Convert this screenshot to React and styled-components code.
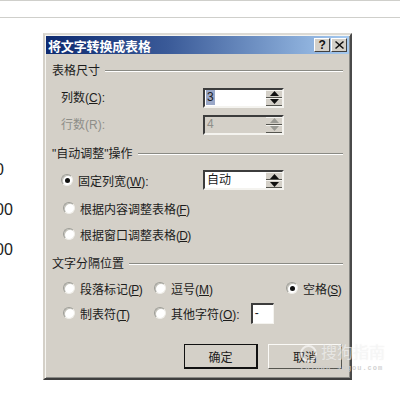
import React from 'react';
import styled, { createGlobalStyle } from 'styled-components';

const Global = createGlobalStyle`
  html, body { margin: 0; padding: 0; background: #fff; }
  * { box-sizing: border-box; }
`;
const FONT = `"Liberation Sans", "Noto Sans CJK SC", sans-serif`;

const Page = styled.div`
  position: relative; width: 400px; height: 400px; overflow: hidden; background: #fff;
  font-family: ${FONT}; font-size: 12px; color: #1c1c1c;
`;
const Ruler = styled.div`
  height: 18px; border-top: 1px solid #cfcfcb; border-bottom: 1px solid #cfcfcb;
`;
const Main = styled.div`display: flex; align-items: flex-start;`;
const DocColumn = styled.div`
  width: 43px; flex: none; padding-top: 132px;
  display: flex; flex-direction: column; overflow: hidden;
`;
const DocLine = styled.div`
  height: 39.75px; margin-left: -5px; color: #222;
  font: 16px/39.75px "Liberation Sans", sans-serif;
`;
const Dialog = styled.div`
  width: 309px; height: 347px; margin-top: 15px; background: #d4d0c8;
  border-style: solid; border-width: 2px;
  border-color: #dcdad4 #4a4a4a #3e3e3e #d4d0c8;
  box-shadow: inset 1px 1px 0 #f6f5f1, inset -1px -1px 0 #8a8a86;
  padding: 1px;
  display: flex; flex-direction: column;
`;
const TitleBar = styled.div`
  height: 18px; flex: none; display: flex; align-items: center; padding: 0 2px;
  background: linear-gradient(90deg, #0d2a70 0%, #3a5a98 40%, #a6caf0 100%);
  color: #fff; font-weight: 700; font-size: 13px; letter-spacing: -0.15px;
`;
const TitleText = styled.span`flex: 1;`;
const TitleBtn = styled.div`
  width: 16px; height: 14px; margin-left: 1px; background: #d4d0c8; color: #111;
  border-style: solid; border-width: 1px;
  border-color: #fff #404040 #404040 #fff;
  display: flex; align-items: center; justify-content: center;
  font: 700 12px "Liberation Sans", sans-serif;
`;
const CloseSvg = styled.svg`width: 9px; height: 8px; display: block;`;
const Body = styled.div`
  flex: 1; position: relative; padding: 9px 6px 0; display: flex; flex-direction: column;
`;
const Heading = styled.div`
  height: 16px; margin-top: ${p => p.$top || 0}px; display: flex; align-items: center; gap: 5px; white-space: nowrap;
  line-height: 16px;
`;
const HeadingRule = styled.div`
  flex: 1; height: 2px; border-top: 1px solid #8a8a84; border-bottom: 1px solid #fff;
`;
const FieldRow = styled.div`
  height: 20px; margin-top: ${p => p.$top || 0}px; padding-left: 9px;
  display: grid; grid-template-columns: 142px 81px; align-items: center;
`;
const FieldLabel = styled.label`
  color: ${p => p.$disabled ? '#8e8e88' : 'inherit'}; white-space: nowrap; line-height: 20px; padding-top: 1px;
`;
const Spin = styled.div`
  width: 81px; height: 20px; display: flex; align-items: center; justify-content: space-between;
  background: ${p => p.$disabled ? '#d4d0c8' : '#fff'};
  border-style: solid; border-width: 2px;
  border-color: #3c3c3c #f4f3ef #f4f3ef #3c3c3c;
  padding-left: 1px;
  color: ${p => p.$disabled ? '#8e8e88' : 'inherit'};
`;
const SpinValue = styled.span`
  line-height: 15px; font-size: 12px; padding: 0 1px;
  background: ${p => p.$selected ? '#9aa8c8' : 'transparent'};
`;
const SpinButtons = styled.div`
  width: 16px; height: 16px; display: flex; flex-direction: column; flex: none;
`;
const SpinButton = styled.div`
  flex: 1; background: #d4d0c8; border-bottom: 1px solid #55554f; border-top: 1px solid #f4f3ef;
  display: flex; align-items: center; justify-content: center;
`;
const ArrowSvg = styled.svg`width: 9px; height: 5px; display: block;`;
const Arrow = ({ down, color }) => (
  <ArrowSvg viewBox="0 0 9 5">
    <path d={down ? 'M0 0h9L4.5 5z' : 'M4.5 0L9 5H0z'} fill={color} />
  </ArrowSvg>
);
const SpinBox = ({ value, selected, disabled }) => {
  const c = disabled ? '#9a9a94' : '#111';
  return (
    <Spin $disabled={disabled}>
      <SpinValue $selected={selected}>{value}</SpinValue>
      <SpinButtons>
        <SpinButton><Arrow color={c} /></SpinButton>
        <SpinButton><Arrow down color={c} /></SpinButton>
      </SpinButtons>
    </Spin>
  );
};
const OptionRow = styled.div`
  height: 20px; margin-top: ${p => p.$top || 0}px; padding-left: 11px;
  display: flex; align-items: center;
`;
const OptionGrid = styled.div`
  display: grid; grid-template-columns: 91px 132px 1fr; padding-left: 11px;
  margin-top: ${p => p.$top || 0}px; grid-auto-rows: 20px; row-gap: 5px; align-items: center;
`;
const Option = styled.div`display: flex; align-items: center; gap: 5px; white-space: nowrap;`;
const RadioCircle = styled.span`
  width: 12px; height: 12px; flex: none; border-radius: 50%; background: #fff;
  border-style: solid; border-width: 1px; border-color: #9c9c96 #efeee9 #efeee9 #9c9c96;
  box-shadow: inset 1px 1px 0 #c2c0b8;
  display: flex; align-items: center; justify-content: center;
`;
const RadioDot = styled.span`
  width: 5px; height: 5px; border-radius: 50%; background: #111;
`;
const Accel = styled.span`letter-spacing: -0.7px;`;
const Radio = ({ checked, children }) => (
  <Option>
    <RadioCircle>{checked && <RadioDot />}</RadioCircle>
    <span>{children}</span>
  </Option>
);
const OtherInput = styled.div`
  width: 23px; height: 21px; margin-left: 6px; background: #fff; flex: none;
  border-style: solid; border-width: 2px 1px 1px 2px;
  border-color: #3c3c3c #f4f3ef #f4f3ef #3c3c3c;
  padding-left: 2px; line-height: 16px;
`;
const Buttons = styled.div`
  display: flex; gap: 10px; justify-content: flex-end; margin-top: 21px; margin-right: 1px;
`;
const Button = styled.div`
  width: 74px; height: 25px; display: flex; align-items: center; justify-content: center;
  background: #d4d0c8; font-size: 12px;
  border-style: solid;
  border-width: ${p => p.$primary ? '1px 2px 2px 1px' : '1px'};
  border-color: ${p => p.$primary ? '#111' : '#fbfaf7 #55554f #55554f #fbfaf7'};
`;
const Watermark = styled.div`
  position: absolute; left: 300px; top: 344px; color: rgba(255,255,255,.55);
  text-shadow: 0 0 1px rgba(190,190,190,.35);
  display: flex; flex-direction: column; pointer-events: none;
`;
const WatermarkMark = styled.div`
  display: flex; align-items: center; gap: 4px; font-size: 16px; line-height: 18px; white-space: nowrap;
`;
const WatermarkRing = styled.span`
  width: 17px; height: 17px; border: 2px solid rgba(255,255,255,.6); border-radius: 50%; flex: none;
`;
const WatermarkUrl = styled.div`
  font: 700 7px "Liberation Mono", monospace; margin-top: 2px; letter-spacing: 1px; color: rgba(205,205,205,.9); text-shadow: none; white-space: nowrap;
`;

export default function App() {
  return (
    <Page>
      <Global />
      <Ruler />
      <Main>
        <DocColumn>
          <DocLine>0</DocLine>
          <DocLine>00</DocLine>
          <DocLine>00</DocLine>
        </DocColumn>
        <Dialog>
          <TitleBar>
            <TitleText>将文字转换成表格</TitleText>
            <TitleBtn>?</TitleBtn>
            <TitleBtn>
              <CloseSvg viewBox="0 0 9 8"><path d="M1 0l3.500 3L8 0l1 1-3.500 3L9 7 8 8 4.500 5 1 8 0 7l3.500-3L0 1z" fill="#111" /></CloseSvg>
            </TitleBtn>
          </TitleBar>
          <Body>
            <Heading>表格尺寸<HeadingRule /></Heading>
            <FieldRow $top={8}>
              <FieldLabel>列数(<u>C</u>):</FieldLabel>
              <SpinBox value="3" selected />
            </FieldRow>
            <FieldRow $top={7}>
              <FieldLabel $disabled>行数(R):</FieldLabel>
              <SpinBox value="4" disabled />
            </FieldRow>
            <Heading $top={12}>"自动调整"操作<HeadingRule /></Heading>
            <FieldRow $top={8}>
              <Radio checked>固定列宽(<u>W</u>):</Radio>
              <SpinBox value="自动" />
            </FieldRow>
            <OptionRow $top={8}><Radio>根据内容调整表格<Accel>(<u>F</u>)</Accel></Radio></OptionRow>
            <OptionRow $top={6}><Radio>根据窗口调整表格<Accel>(<u>D</u>)</Accel></Radio></OptionRow>
            <Heading $top={12}>文字分隔位置<HeadingRule /></Heading>
            <OptionGrid $top={6}>
              <Radio>段落标记<Accel>(<u>P</u>)</Accel></Radio>
              <Radio>逗号(<u>M</u>)</Radio>
              <Radio checked>空格<Accel>(<u>S</u>)</Accel></Radio>
              <Radio>制表符<Accel>(<u>T</u>)</Accel></Radio>
              <Option>
                <Radio>其他字符(<u>O</u>):</Radio>
                <OtherInput>-</OtherInput>
              </Option>
            </OptionGrid>
            <Buttons>
              <Button $primary>确定</Button>
              <Button>取消</Button>
            </Buttons>
          </Body>
        </Dialog>
      </Main>
      <Watermark>
        <WatermarkMark><WatermarkRing />搜狗指南</WatermarkMark>
        <WatermarkUrl>zhinan.sogou.com</WatermarkUrl>
      </Watermark>
    </Page>
  );
}
